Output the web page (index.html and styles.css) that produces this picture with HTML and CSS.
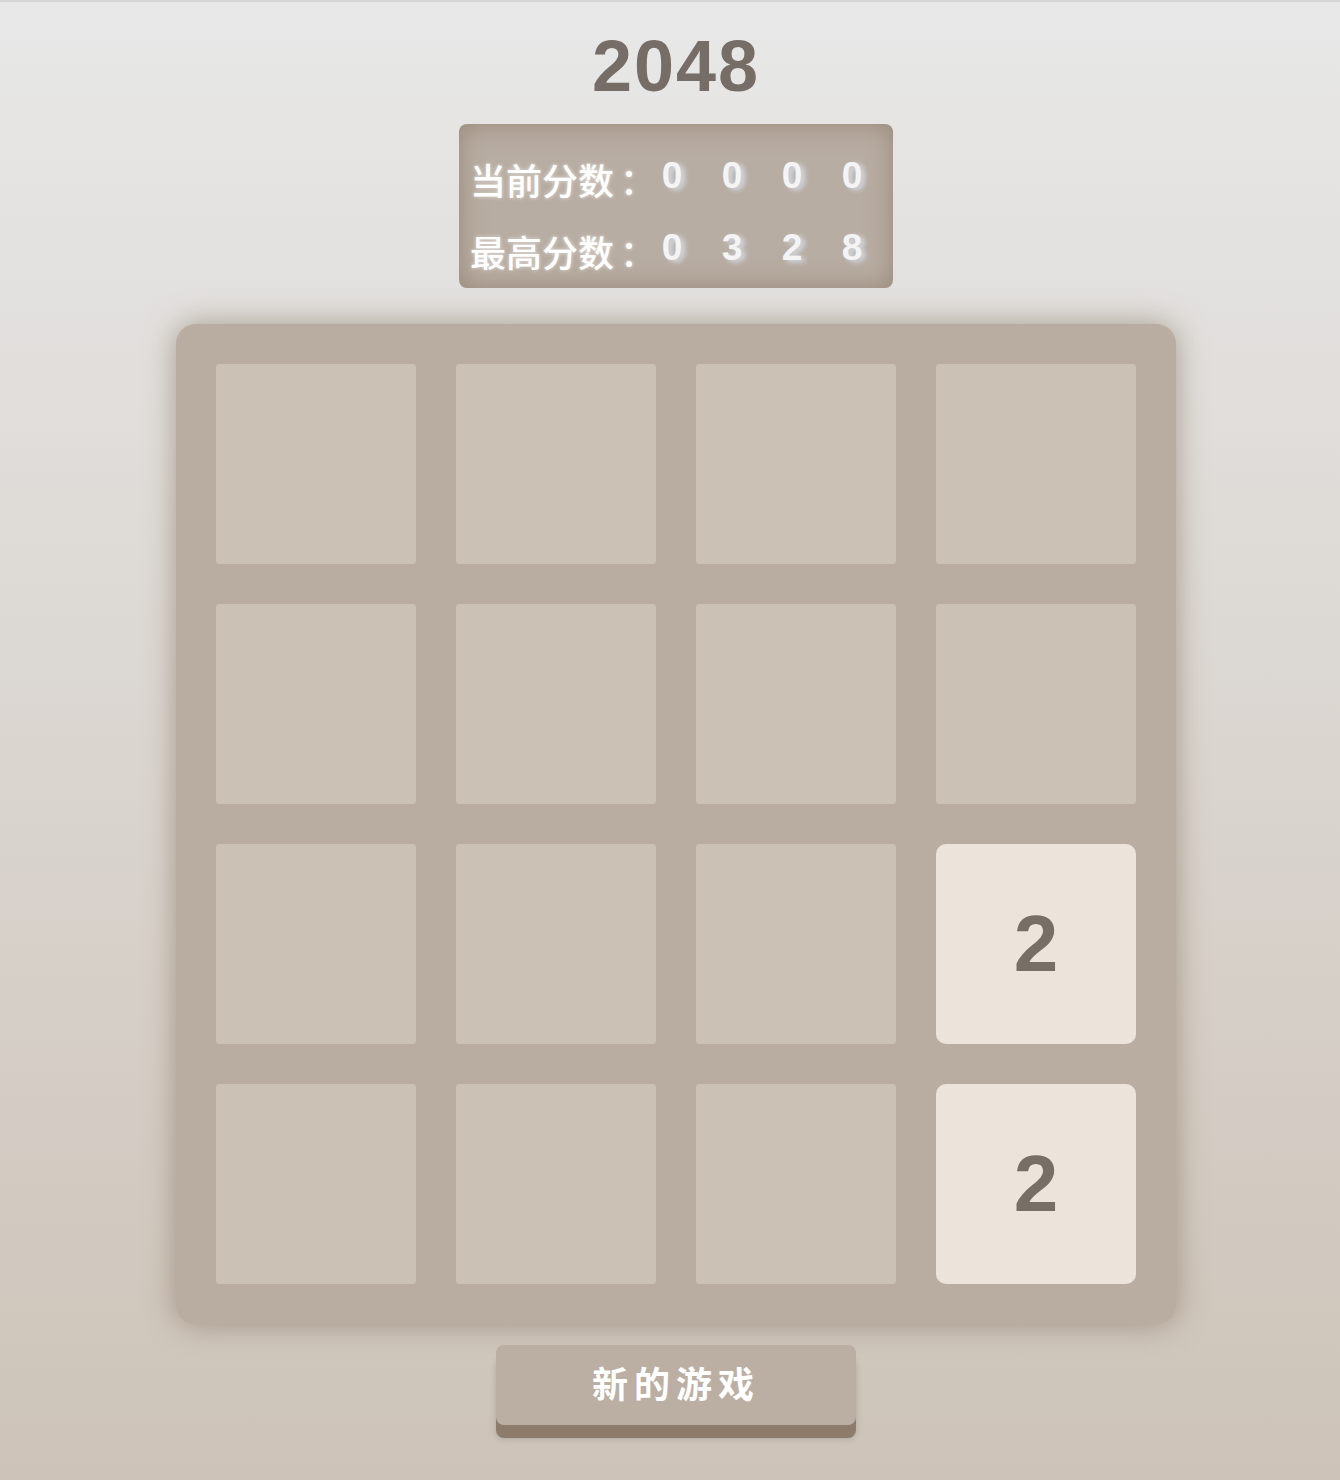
FILE: index.html
```html
<!DOCTYPE html>
<html lang="zh-CN">
<head>
    <meta charset="UTF-8">
    <meta name="viewport" content="width=device-width, initial-scale=1.0">
    <title>2048</title>
    <link rel="stylesheet" href="styles.css">
</head>
<body>
    <div class="container">
        <h1>2048</h1>

        <div class="score-panel">
            <div class="score-row">
                <span class="score-label">当前分数<span class="colon">：</span></span>
                <span class="digit">0</span>
                <span class="digit">0</span>
                <span class="digit">0</span>
                <span class="digit">0</span>
            </div>
            <div class="score-row">
                <span class="score-label">最高分数<span class="colon">：</span></span>
                <span class="digit">0</span>
                <span class="digit">3</span>
                <span class="digit">2</span>
                <span class="digit">8</span>
            </div>
        </div>

        <div class="board">
            <div class="cell"></div>
            <div class="cell"></div>
            <div class="cell"></div>
            <div class="cell"></div>
            <div class="cell"></div>
            <div class="cell"></div>
            <div class="cell"></div>
            <div class="cell"></div>
            <div class="cell"></div>
            <div class="cell"></div>
            <div class="cell"></div>
            <div class="cell tile-2">2</div>
            <div class="cell"></div>
            <div class="cell"></div>
            <div class="cell"></div>
            <div class="cell tile-2">2</div>
        </div>

        <button class="new-game">新的游戏</button>
    </div>
</body>
</html>
```

FILE: styles.css
```css
* {
    margin: 0;
    padding: 0;
    box-sizing: border-box;
}

body {
    font-family: 'Liberation Sans', 'Noto Sans CJK SC', sans-serif;
    background: linear-gradient(#e8e8e8, #cdc3b8);
    border-top: 2px solid #d5d5d5;
    min-height: 1480px;
    color: #776e65;
}

.container {
    display: flex;
    flex-direction: column;
    align-items: center;
    padding-left: 12px;
}

h1 {
    font-size: 72px;
    font-weight: bold;
    line-height: 80px;
    margin-top: 24px;
    color: #756d66;
    letter-spacing: 2px;
}

.score-panel {
    width: 434px;
    height: 164px;
    margin-top: 18px;
    padding: 24px 0 0 11px;
    border-radius: 8px;
    background: #b8ada2;
    box-shadow: inset 0 0 26px rgba(120, 100, 80, 0.5);
    display: flex;
    flex-direction: column;
    gap: 16px;
}

.score-row {
    display: flex;
    align-items: center;
    height: 56px;
}

.score-label {
    flex: 0 0 172px;
    min-width: 0;
    white-space: nowrap;
    font-size: 36px;
    font-weight: 500;
    color: #fff;
    font-family: 'Noto Sans CJK SC', sans-serif;
    text-shadow: 0 0 4px rgba(255, 255, 255, 0.6);
    position: relative;
    top: 3px;
}

.colon {
    padding-left: 6px;
}

.digit {
    flex: 0 0 60px;
    text-align: center;
    font-family: 'Liberation Sans Narrow', 'Liberation Sans', sans-serif;
    font-size: 37px;
    font-weight: bold;
    color: #f4f4f4;
    text-shadow: 4px 2px 5px rgba(215, 225, 240, 0.9);
}

.board {
    margin-top: 36px;
    width: 1000px;
    height: 1000px;
    padding: 40px;
    border-radius: 20px;
    background: #b9ada1;
    box-shadow: 0 0 30px rgba(120, 100, 80, 0.55);
    display: grid;
    grid-template-columns: repeat(4, 200px);
    grid-template-rows: repeat(4, 200px);
    gap: 40px;
}

.cell {
    border-radius: 3px;
    background: #cbc1b5;
    display: flex;
    align-items: center;
    justify-content: center;
    font-size: 80px;
    font-weight: bold;
    color: #776e65;
}

.tile-2 {
    background: #ece4db;
    border-radius: 10px;
}

.new-game {
    margin-top: 21px;
    width: 360px;
    height: 80px;
    border: none;
    border-radius: 8px;
    background: #bbafa3;
    color: #fff;
    font-family: 'Noto Sans CJK SC', sans-serif;
    font-size: 36px;
    font-weight: bold;
    letter-spacing: 6px;
    padding: 0 0 6px 0;
    box-shadow: 0 13px 0 #8d7c6b, 0 14px 6px rgba(0, 0, 0, 0.15);
    cursor: pointer;
}
```
